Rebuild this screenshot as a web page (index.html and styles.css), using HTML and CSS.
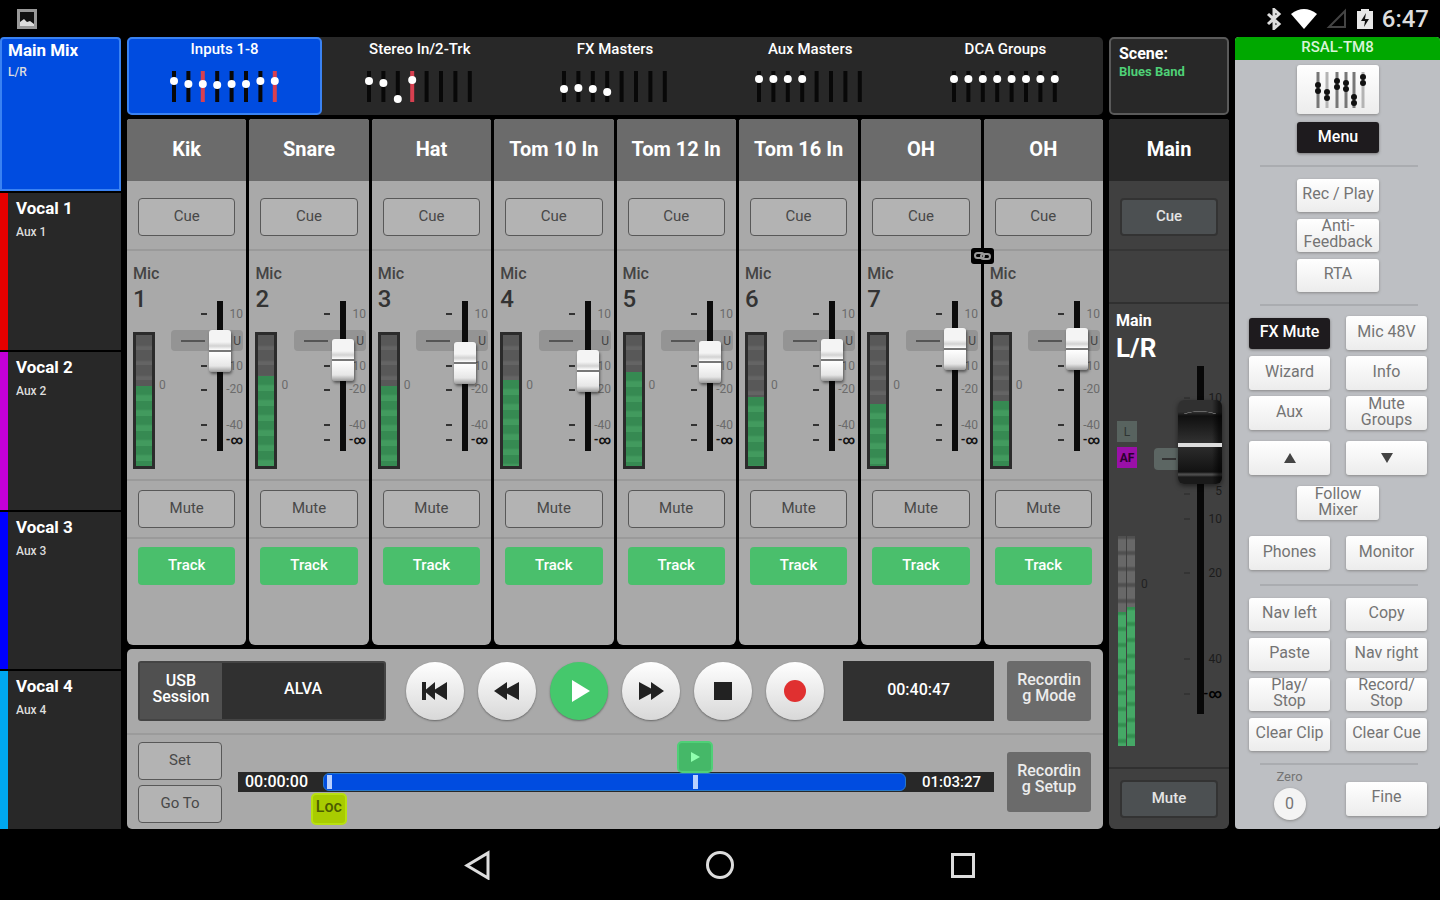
FILE: index.html
```html
<!DOCTYPE html>
<html lang="en">
<head>
<meta charset="utf-8">
<meta name="viewport" content="width=device-width, initial-scale=1">
<title>Mixer Control</title>
<link rel="stylesheet" href="styles.css">
</head>
<body>
<div class="device">
  <header class="status">
    <svg class="status-photo" width="20" height="20" viewBox="0 0 20 20"><path d="M1.5 1.5h17v17h-17z" fill="#111" stroke="#999" stroke-width="3"/><path d="M3 17v-4l4-3 3 3 3-1 4 3v2z" fill="#ddd"/></svg>
    <div class="status-right">
      <svg width="16" height="22" viewBox="0 0 16 22"><path d="M2 6l11 10-5 4.500V1.500L13 6 2 16" fill="none" stroke="#ddd" stroke-width="3"/></svg>
      <svg width="28" height="22" viewBox="0 0 28 22"><path d="M1 6Q14-4 27 6L14 21z" fill="#fff"/></svg>
      <svg width="22" height="22" viewBox="0 0 22 22"><path d="M19 3v16H3z" fill="none" stroke="#444" stroke-width="2"/></svg>
      <svg width="18" height="22" viewBox="0 0 18 22"><path d="M1 3h4V1h8v2h4v18H1z" fill="#e8e8e8"/><path d="M10 5l-5 8h4l-1 6 5-8H9z" fill="#111"/></svg>
      <span class="clock">6:47</span>
    </div>
  </header>

  <main class="console">
    <nav class="mixes" aria-label="Mixes">
      <button class="mix mix-active"><b>Main Mix</b><span>L/R</span></button>
      <button class="mix mix-red"><b>Vocal 1</b><span>Aux 1</span></button>
      <button class="mix mix-magenta"><b>Vocal 2</b><span>Aux 2</span></button>
      <button class="mix mix-blue"><b>Vocal 3</b><span>Aux 3</span></button>
      <button class="mix mix-sky"><b>Vocal 4</b><span>Aux 4</span></button>
    </nav>

    <section class="center">
      <div class="tabs" id="tabs"></div>
      <div class="strips" id="strips"></div>

      <div class="transport">
        <div class="transport-row">
          <div class="session"><span class="session-label">USB<br>Session</span><span class="session-name">ALVA</span></div>
          <div class="keys">
            <button class="key" aria-label="Previous"><svg width="28" height="22" viewBox="0 0 28 22"><path d="M1 2h4v7.500L14 2v7.500L26 2v18l-12-7.500V20l-9-7.500V20H1z" fill="#222"/></svg></button>
            <button class="key" aria-label="Rewind"><svg width="28" height="22" viewBox="0 0 28 22"><path d="M1 11L14 2v6.500L26 2v18l-12-6.500V20z" fill="#222"/></svg></button>
            <button class="key key-play" aria-label="Play"><svg width="28" height="24" viewBox="0 0 28 24"><path d="M7 1l18 11L7 23z" fill="#fff"/></svg></button>
            <button class="key" aria-label="Fast forward"><svg width="28" height="22" viewBox="0 0 28 22"><path d="M27 11L14 2v6.500L2 2v18l12-6.500V20z" fill="#222"/></svg></button>
            <button class="key" aria-label="Stop"><svg width="18" height="18" viewBox="0 0 18 18"><path d="M0 0h18v18H0z" fill="#222"/></svg></button>
            <button class="key" aria-label="Record"><svg width="22" height="22" viewBox="0 0 22 22"><circle cx="11" cy="11" r="11" fill="#e03030"/></svg></button>
          </div>
          <div class="elapsed">00:40:47</div>
          <button class="rec-btn">Recordin<br>g Mode</button>
        </div>
        <div class="transport-row transport-row-bottom">
          <div class="locate">
            <button class="outline-btn">Set</button>
            <button class="outline-btn">Go To</button>
          </div>
          <div class="timeline">
            <span class="time-start">00:00:00</span>
            <div class="progress">
              <i class="tick" style="left:1%"></i>
              <i class="tick" style="left:64%"></i>
              <button class="marker marker-play" style="left:64%" aria-label="Play position"><svg width="12" height="12" viewBox="0 0 12 12"><path d="M2 1l9 5-9 5z" fill="#8fffae"/></svg></button>
              <button class="marker marker-loc" style="left:1%">Loc</button>
            </div>
            <span class="time-end">01:03:27</span>
          </div>
          <button class="rec-btn">Recordin<br>g Setup</button>
        </div>
      </div>
    </section>

    <section class="master">
      <div class="scene"><b>Scene:</b><span>Blues Band</span></div>
      <div class="main-strip">
        <h2 class="strip-name main-name">Main</h2>
        <div class="strip-cell cell-cue"><button class="dark-btn">Cue</button></div>
        <div class="main-blank"></div>
        <div class="main-fader">
          <div class="main-left">
            <label class="main-label" for="main-level">Main</label>
            <span class="main-bus">L/R</span>
            <span class="badge badge-l">L</span>
            <span class="badge badge-af">AF</span>
            <div class="main-meters">
              <div class="led"><div class="led-fill" style="height:64%"></div></div>
              <div class="led"><div class="led-fill" style="height:66%"></div></div>
              <span class="led-zero">0</span>
            </div>
          </div>
          <div class="main-scale">
            <svg width="74" height="348" viewBox="0 0 74 348">
              <rect x="0" y="82" width="60" height="22" rx="4" fill="#5c6663"/>
              <path d="M8 93h14" stroke="#333" stroke-width="2"/>
              <path d="M30 32h6M30 128h6M30 153h6M30 207h6M30 293h6M30 328h6" stroke="#343434" stroke-width="2"/>
              <g class="main-nums"><text x="68" y="36">10</text><text x="68" y="129">5</text><text x="68" y="157">10</text><text x="68" y="211">20</text><text x="68" y="297">40</text><text class="inf" x="68" y="332">-∞</text></g>
            </svg>
            <input class="fader fader-main" id="main-level" type="range" min="0" max="100" value="97">
          </div>
        </div>
        <div class="main-mute"><button class="dark-btn">Mute</button></div>
      </div>
    </section>

    <aside class="panel">
      <h1 class="panel-title">RSAL-TM8</h1>
      <div class="group">
        <button class="soft-btn wide mixer-btn" aria-label="Mixer">
          <svg width="56" height="40" viewBox="0 0 56 40"><g stroke="#777" stroke-width="3"><path d="M8 2v36M27 2v36M36 2v36M44 2v36"/><path d="M17 2v36M53 2v36" stroke="#b4b4b4"/></g><g fill="#111"><circle cx="8" cy="15" r="3"/><circle cx="8" cy="21" r="3"/><circle cx="17" cy="22" r="3"/><circle cx="17" cy="28" r="3"/><circle cx="27" cy="11" r="3"/><circle cx="27" cy="17" r="3"/><circle cx="36" cy="13" r="3"/><circle cx="36" cy="19" r="3"/><circle cx="44" cy="27" r="3"/><circle cx="44" cy="33" r="3"/><circle cx="53" cy="7" r="3"/><circle cx="53" cy="13" r="3"/></g></svg>
        </button>
        <button class="black-btn wide">Menu</button>
      </div>
      <div class="group group-tight">
        <button class="soft-btn wide">Rec / Play</button>
        <button class="soft-btn wide">Anti-<br>Feedback</button>
        <button class="soft-btn wide">RTA</button>
      </div>
      <div class="group group-main">
        <button class="black-btn">FX Mute</button><button class="soft-btn">Mic 48V</button>
        <button class="soft-btn">Wizard</button><button class="soft-btn">Info</button>
        <button class="soft-btn">Aux</button><button class="soft-btn">Mute<br>Groups</button>
        <button class="soft-btn spaced" aria-label="Up"><svg class="arrow" width="12" height="10" viewBox="0 0 12 10"><path d="M6 0l6 10H0z" fill="#444"/></svg></button><button class="soft-btn spaced" aria-label="Down"><svg class="arrow" width="12" height="10" viewBox="0 0 12 10"><path d="M6 10l6-10H0z" fill="#444"/></svg></button>
        <button class="soft-btn wide spaced">Follow<br>Mixer</button>
        <button class="soft-btn spaced-more">Phones</button><button class="soft-btn spaced-more">Monitor</button>
      </div>
      <div class="group group-tight">
        <button class="soft-btn">Nav left</button><button class="soft-btn">Copy</button>
        <button class="soft-btn">Paste</button><button class="soft-btn">Nav right</button>
        <button class="soft-btn">Play/<br>Stop</button><button class="soft-btn">Record/<br>Stop</button>
        <button class="soft-btn">Clear Clip</button><button class="soft-btn">Clear Cue</button>
      </div>
      <div class="group group-last">
        <div class="zero"><label for="zero">Zero</label><button class="zero-btn" id="zero">0</button></div>
        <button class="soft-btn">Fine</button>
      </div>
    </aside>
  </main>

  <footer class="android">
    <button aria-label="Back"><svg width="30" height="30" viewBox="0 0 30 30"><path d="M26 3v25L5 15.500z"/></svg></button>
    <button aria-label="Home"><svg width="30" height="30" viewBox="0 0 30 30"><circle cx="15" cy="15" r="12.500"/></svg></button>
    <button aria-label="Overview"><svg width="30" height="30" viewBox="0 0 30 30"><rect x="4.500" y="4.500" width="21" height="22"/></svg></button>
  </footer>
</div>
<script src="app.js"></script>
</body>
</html>
```

FILE: styles.css
```css
* { box-sizing: border-box; }
body { margin: 0; background: #000; font-family: Roboto, "Liberation Sans", sans-serif; color: #fff; }
button { font: inherit; color: inherit; border: 0; padding: 0; margin: 0; background: none; display: flex; align-items: center; justify-content: center; text-align: center; }
h1, h2 { margin: 0; }
.device { min-height: 100vh; display: flex; flex-direction: column; }

.status { height: 37px; display: flex; align-items: center; justify-content: space-between; padding: 0 11px 0 17px; }
.status-right { display: flex; align-items: center; gap: 8px; }
.clock { font-size: 24px; font-weight: 500; line-height: 28px; color: #ddd; }

.console { flex: 1; display: grid; grid-template-columns: minmax(0, 121fr) minmax(0, 976fr) minmax(0, 120fr) minmax(0, 205fr); gap: 6px; }

.mixes { display: flex; flex-direction: column; gap: 2px; }
.mix { flex: 1; flex-direction: column; align-items: flex-start; justify-content: flex-start; padding: 5px 8px; background: #282828; border-left: 8px solid #000; text-align: left; gap: 6px; }
.mix b { font-size: 17px; line-height: 20px; font-weight: 700; }
.mix span { font-size: 12px; line-height: 16px; font-weight: 500; color: #ddd; }
.mix-active { background: #004ce0; border: 2px solid #3a82f2; border-radius: 4px 4px 0 0; padding: 1px 6px; gap: 4px; }
.mix-red { border-left-color: #e60000; }
.mix-magenta { border-left-color: #c400d8; }
.mix-blue { border-left-color: #0000ff; }
.mix-sky { border-left-color: #00a8f0; }

.center { display: flex; flex-direction: column; gap: 4px; }
.tabs { display: flex; background: #282828; border-radius: 5px; }
.tab { flex: 1; height: 78px; flex-direction: column; justify-content: flex-start; gap: 11px; border: 2px solid transparent; border-radius: 5px; font-size: 15px; line-height: 20px; font-weight: 500; }
.tab-active { background: #004ce0; border-color: #3a82f2; }

.strips { flex: 1; display: flex; gap: 3px; }
.strip { flex: 1; position: relative; display: flex; flex-direction: column; background: #a9a9a9; border-radius: 3px 3px 6px 6px; color: #444; }
.strip-name { height: 62px; display: flex; align-items: center; justify-content: center; background: #6b6b6b; color: #fff; font-size: 20px; font-weight: 700; border-radius: 3px 3px 0 0; padding-bottom: 2px; }
.strip-cell { display: flex; align-items: center; justify-content: center; padding: 0 11px; border-bottom: 2px solid #9a9a9a; }
.cell-cue { height: 70px; padding-top: 3px; }
.cell-mute { height: 58px; }
.cell-track { height: 54px; border-bottom: 0; }
.strip-cell > button { flex: 1; height: 38px; }
.outline-btn { border: 1px solid #585858; border-radius: 4px; background: #b3b3b3; color: #484848; font-size: 15px; line-height: 20px; padding-bottom: 2px; }
.track-btn { background: #4abf6c; border-radius: 4px; color: #fff; font-size: 15px; font-weight: 500; padding-bottom: 2px; }
.cell-level { height: 230px; display: grid; grid-template-columns: 22px 1fr 76px; grid-template-rows: 50px 1fr; padding: 0 0 0 6px; border-bottom: 2px solid #9a9a9a; }
.source { grid-column: 1 / 3; padding-top: 12px; font-size: 16px; line-height: 22px; font-weight: 500; }
.source b { display: block; font-size: 24px; line-height: 28px; font-weight: 500; color: #333; }
.meter { grid-row: 2; height: 137px; margin-top: 31px; border: 3px solid #2b2b2b; display: flex; align-items: flex-end; background: repeating-linear-gradient(#585858 0 10px, #646464 12px 15px); }
.meter-fill { width: 100%; background: repeating-linear-gradient(#368a52 0 8px, #429a5e 10px 15px); }
.meter-zero { grid-row: 2; padding: 77px 0 0 4px; font-size: 12px; line-height: 14px; color: #6b6b6b; }
.scale { grid-row: 2; grid-column: 3; display: grid; align-items: start; }
.scale > * { grid-area: 1 / 1; }
.scale text { font-size: 12px; text-anchor: end; fill: #6b6b6b; }
.scale .unity { fill: #444; }
.scale .inf { font-size: 12px; font-weight: 700; fill: #111; }

.fader { appearance: none; -webkit-appearance: none; writing-mode: vertical-lr; direction: rtl; width: 24px; height: 150px; margin: 0 0 0 38px; background: linear-gradient(#0c0c0c, #0c0c0c) center / 6px 100% no-repeat; }
.fader::-webkit-slider-thumb { -webkit-appearance: none; width: 22px; height: 42px; border-radius: 3px; background: linear-gradient(#f4f4f4 0 12px, #d2d2d2 16px, #fff 20px, #777 20px 22px, #fff 22px, #e6e6e6 36px, #999 42px); box-shadow: 1px 2px 3px rgba(0, 0, 0, .5); }
.link { position: absolute; right: -13px; top: 129px; z-index: 1; width: 23px; height: 16px; background: #000; border-radius: 3px; display: flex; align-items: center; justify-content: center; }

.transport { background: #a9a9a9; border-radius: 5px; }
.transport-row { display: flex; align-items: center; gap: 13px; height: 86px; padding: 0 12px 0 11px; border-bottom: 2px solid #9b9b9b; }
.transport-row-bottom { height: 94px; border-bottom: 0; }
.session { flex: 248; height: 60px; display: flex; background: #303030; border: 2px solid #444; border-radius: 3px; font-size: 16px; line-height: 16px; font-weight: 500; }
.session-label { width: 82px; background: #505050; display: flex; align-items: center; justify-content: center; text-align: center; padding-bottom: 4px; }
.session-name { flex: 1; display: flex; align-items: center; justify-content: center; padding-bottom: 4px; }
.keys { display: flex; gap: 14px; padding: 0 6px 0 7px; }
.key { width: 58px; height: 58px; border-radius: 50%; background: linear-gradient(#fff, #d8d8d8); box-shadow: 0 1px 2px #666; }
.key-play { background: #45c86c; }
.elapsed { flex: 153; height: 60px; display: flex; align-items: center; justify-content: center; padding-bottom: 4px; background: #303030; font-size: 16px; font-weight: 500; }
.rec-btn { width: 84px; height: 60px; background: #6b6b6b; border-radius: 3px; font-size: 16px; line-height: 16px; font-weight: 500; color: #ececec; padding-bottom: 6px; }
.locate { width: 84px; display: grid; gap: 5px; }
.locate .outline-btn { height: 38px; }
.timeline { flex: 1; margin-left: 3px; height: 20px; display: flex; align-items: center; background: #282828; font-size: 16px; font-weight: 500; line-height: 20px; }
.time-start { width: 85px; padding-left: 7px; }
.time-end { width: 88px; padding-left: 16px; font-size: 15px; }
.progress { flex: 1; position: relative; height: 18px; background: #004ce0; border: 1px solid #2878c8; border-radius: 6px; }
.tick { position: absolute; top: 1px; width: 5px; height: 14px; margin-left: -3px; background: #b8d0ff; }
.marker { position: absolute; width: 36px; height: 32px; margin-left: -19px; border-radius: 5px; }
.marker-play { top: -33px; background: #45b868; border: 2px solid #4fd077; }
.marker-loc { top: 19px; background: #a8cc00; border: 2px solid #b8e010; color: #4c5c00; font-size: 16px; padding-bottom: 4px; }

.master { display: flex; flex-direction: column; gap: 4px; }
.scene { height: 78px; border: 2px solid #5a5a5a; border-radius: 5px; background: #282828; padding: 6px 8px; display: flex; flex-direction: column; font-size: 16px; line-height: 18px; }
.scene span { font-size: 13px; font-weight: 700; color: #4fd077; }
.main-strip { flex: 1; display: flex; flex-direction: column; background: #404040; border-radius: 3px 3px 6px 6px; overflow: hidden; }
.main-name { background: #282828; }
.main-strip .strip-cell { border-color: #363636; }
.dark-btn { flex: 1; height: 38px; background: #4c5052; border: 2px solid #333; border-radius: 4px; font-size: 15px; font-weight: 500; color: #e4e4e4; padding-bottom: 2px; }
.main-blank { height: 53px; border-bottom: 2px solid #303030; }
.main-fader { flex: 1; display: flex; justify-content: space-between; padding-left: 7px; }
.main-left { display: flex; flex-direction: column; width: 38px; }
.main-label { margin-top: 6px; font-size: 16px; line-height: 22px; font-weight: 700; }
.main-bus { font-size: 26px; line-height: 32px; font-weight: 700; white-space: nowrap; }
.badge { width: 20px; height: 21px; display: flex; align-items: center; justify-content: center; font-size: 12px; margin-left: 1px; }
.badge-l { margin-top: 57px; background: #58635f; color: #2f3533; }
.badge-af { margin-top: 5px; background: #9a10a8; color: #2c0030; font-weight: 700; }
.main-meters { display: flex; gap: 1px; margin: 68px 0 0 2px; }
.led { width: 8px; height: 210px; display: flex; align-items: flex-end; background: repeating-linear-gradient(#505050 0 2px, #686868 4px 14px, #505050 16px); }
.led-fill { width: 100%; background: repeating-linear-gradient(#338f50 0 2px, #45a866 4px 14px, #338f50 16px); }
.led-zero { font-size: 12px; line-height: 14px; color: #222; padding: 41px 0 0 5px; }
.main-scale { display: grid; align-items: start; margin-top: 62px; width: 75px; }
.main-scale > * { grid-area: 1 / 1; }
.main-nums { font-size: 12px; text-anchor: end; fill: #1c1c1c; }
.main-nums .inf { font-size: 13px; font-weight: 700; fill: #000; }
.fader-main { width: 46px; height: 348px; margin-left: 23px; padding-top: 27px; background: linear-gradient(#080808, #080808) center / 7px 100% no-repeat; }
.fader-main::-webkit-slider-thumb { width: 44px; height: 84px; border-radius: 6px; background: linear-gradient(#ddd, #ddd) 0 43px / 44px 4px no-repeat, radial-gradient(ellipse 20px 6px at 50% 17px, transparent 84%, #666 88% 96%, transparent) 0 0 / 44px 14px no-repeat, linear-gradient(90deg, rgba(0, 0, 0, 0) 34px, rgba(0, 0, 0, .6) 41px), linear-gradient(#303030 0 12px, #101010 16px, #303030 42px, #2c2c2c 46px, #121212 72px, #4c4c4c 74px 75px, #1a1a1a 77px); box-shadow: 0 2px 5px rgba(0, 0, 0, .5); }
.main-mute { height: 62px; display: flex; align-items: center; padding: 0 11px; border-top: 2px solid #303030; }

.panel { background: #bdbfc3; border-radius: 4px; color: #747474; display: flex; flex-direction: column; overflow: hidden; }
.panel-title { height: 23px; background: #00a800; color: #d8f4d8; font-size: 15px; line-height: 20px; font-weight: 500; text-align: center; }
.group { display: grid; grid-template-columns: 1fr 1fr; gap: 8px 16px; padding: 5px 13px 13px 14px; position: relative; }
.group + .group { padding-top: 13px; }
.group + .group::before { content: ""; position: absolute; left: 25px; right: 22px; top: -1px; height: 2px; background: #aaacb0; }
.group.group-tight { row-gap: 7px; }
.group.group-main { row-gap: 6px; padding-top: 11px; padding-bottom: 15px; }
.group-tight .soft-btn { height: 33px; }
.soft-btn { height: 34px; border-radius: 3px; background: linear-gradient(#fff, #ececec); box-shadow: 0 1px 3px #888; font-size: 16px; line-height: 16px; padding-bottom: 3px; white-space: nowrap; }
.wide { grid-column: 1 / 3; justify-self: center; width: 82px; }
.mixer-btn { height: 49px; padding: 0; }
.arrow { margin-top: 3px; }
.black-btn { height: 31px; align-self: center; background: #1e1b1e; color: #fff; border-radius: 3px; box-shadow: 0 1px 3px #777; font-size: 16px; font-weight: 500; padding-bottom: 3px; }
.spaced { margin-top: 5px; }
.spaced-more { margin-top: 10px; }
.group.group-last { align-items: center; padding-bottom: 4px; }
.zero { display: flex; flex-direction: column; align-items: center; font-size: 13px; line-height: 12px; gap: 5px; margin-top: -6px; }
.zero-btn { width: 32px; height: 32px; border-radius: 50%; background: #f4f4f4; box-shadow: 0 1px 3px #888; font-size: 16px; }

.android { height: 71px; display: flex; align-items: center; justify-content: center; gap: 213px; }
.android svg { fill: none; stroke: #ddd; stroke-width: 3; }
```

FILE: app.js
```js
const tabs = [
  { name: 'Inputs 1-8', knobs: [11, 14, 14, 15, 14, 14, 11, 11], red: [2, 7], active: true },
  { name: 'Stereo In/2-Trk', knobs: [11, 13, 29, 10], red: [3] },
  { name: 'FX Masters', knobs: [19, 18, 19, 22], red: [] },
  { name: 'Aux Masters', knobs: [9, 9, 9, 9], red: [] },
  { name: 'DCA Groups', knobs: [9, 9, 9, 9, 9, 9, 9, 9], red: [] }
];

document.getElementById('tabs').innerHTML = tabs.map(t => {
  let art = '';
  for (let i = 0; i < 8; i++) {
    const x = 5 + i * 14.4;
    art += `<path d="M${x} 1v31" stroke="${t.red.includes(i) ? '#d84050' : '#080808'}" stroke-width="4"/>`;
    if (t.knobs[i]) art += `<circle cx="${x}" cy="${t.knobs[i]}" r="4" fill="#fff"/>`;
  }
  return `<button class="tab${t.active ? ' tab-active' : ''}">${t.name}<svg width="112" height="34" viewBox="0 0 112 34">${art}</svg></button>`;
}).join('');

const strips = [
  { name: 'Kik', level: 73, meter: 61 },
  { name: 'Snare', level: 65, meter: 69 },
  { name: 'Hat', level: 62, meter: 61 },
  { name: 'Tom 10 In', level: 55, meter: 66 },
  { name: 'Tom 12 In', level: 63, meter: 72 },
  { name: 'Tom 16 In', level: 65, meter: 53 },
  { name: 'OH', level: 75, meter: 47, linked: true },
  { name: 'OH', level: 75, meter: 50 }
];

const scale = `<svg width="76" height="150" viewBox="0 0 76 150">
  <rect x="1" y="29" width="72" height="21" rx="4" fill="#949494"/>
  <path d="M11 40h24" stroke="#555" stroke-width="2"/>
  <path d="M31 13h6M31 65h6M31 89h6M31 124h6M31 139h6" stroke="#333" stroke-width="2"/>
  <text x="73" y="17">10</text><text class="unity" x="71" y="44">U</text><text x="73" y="69">-10</text>
  <text x="73" y="92">-20</text><text x="73" y="128">-40</text><text class="inf" x="73" y="143">-∞</text>
</svg>`;

const link = `<span class="link"><svg width="17" height="10" viewBox="0 0 17 10" fill="none" stroke="#999" stroke-width="2"><rect x="1" y="2" width="9" height="5" rx="2.500"/><rect x="7" y="3" width="9" height="5" rx="2.500"/></svg></span>`;

document.getElementById('strips').innerHTML = strips.map((s, i) => `
  <section class="strip">
    <h2 class="strip-name">${s.name}</h2>
    <div class="strip-cell cell-cue"><button class="outline-btn">Cue</button></div>
    <div class="cell-level">
      <label class="source" for="level-${i}">Mic<b>${i + 1}</b></label>
      <div class="meter"><div class="meter-fill" style="height:${s.meter}%"></div></div>
      <span class="meter-zero">0</span>
      <div class="scale">${scale}<input class="fader" id="level-${i}" type="range" min="0" max="100" value="${s.level}"></div>
    </div>
    <div class="strip-cell cell-mute"><button class="outline-btn">Mute</button></div>
    <div class="strip-cell cell-track"><button class="track-btn">Track</button></div>
    ${s.linked ? link : ''}
  </section>`).join('');
```
